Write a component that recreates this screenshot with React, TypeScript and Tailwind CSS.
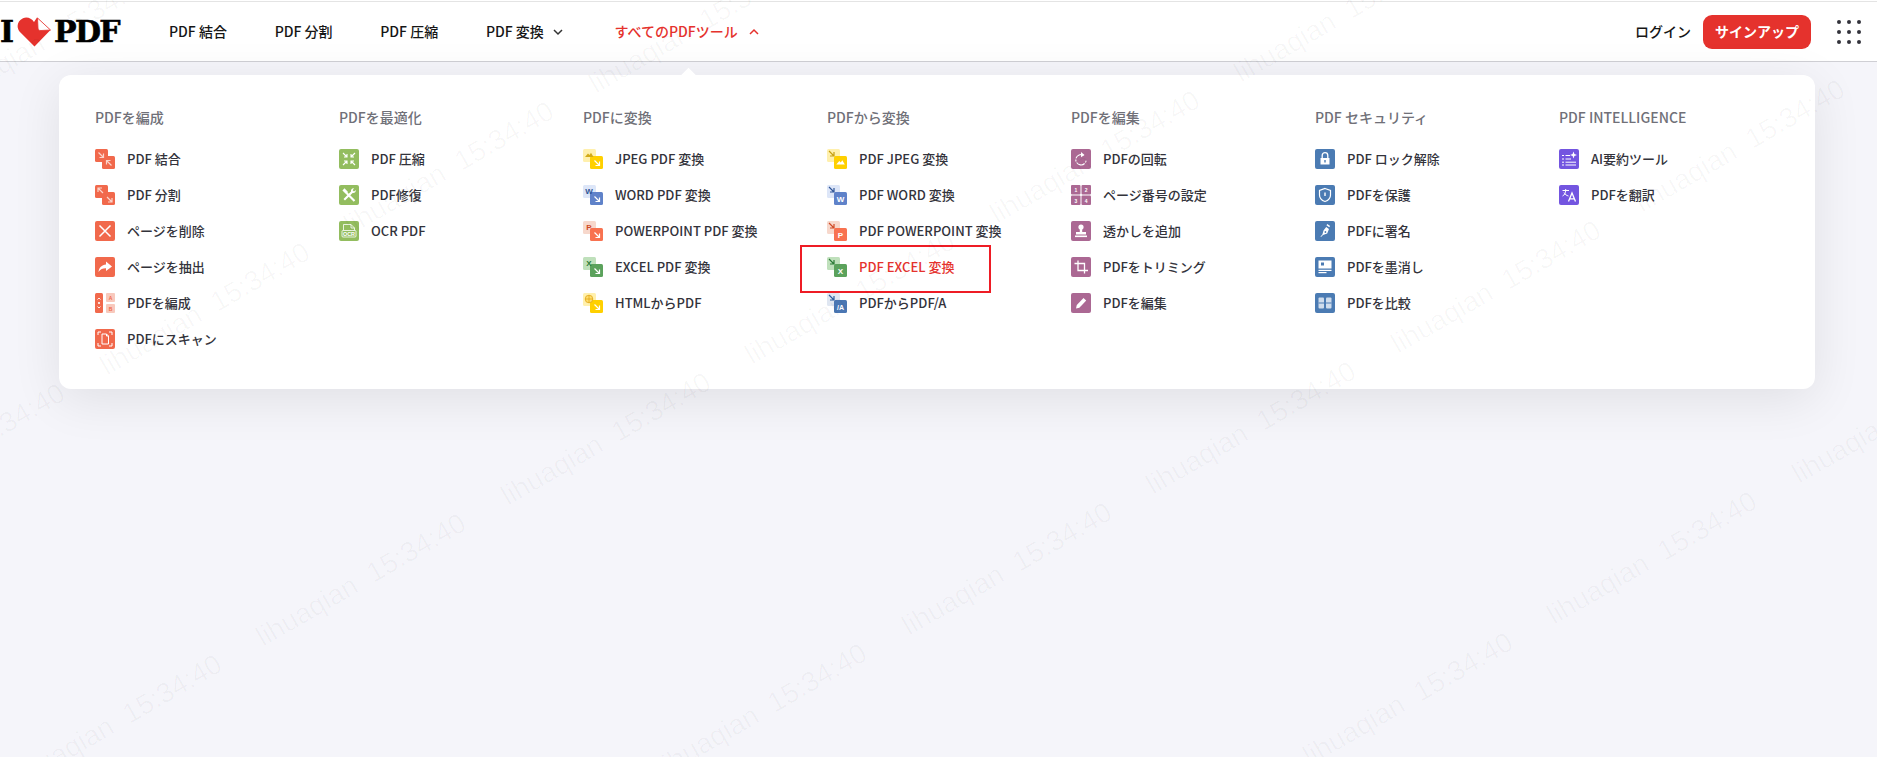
import React from "react";

const ORANGE = "#f1694c";
const GREEN = "#93bd5f";
const PURPLE = "#ab6893";
const BLUE = "#4b7bb3";
const VIOLET = "#7355e0";

function Svg({ children }: { children: React.ReactNode }) {
  return (
    <svg width="20" height="20" viewBox="0 0 20 20" className="shrink-0 block">
      {children}
    </svg>
  );
}

function Solid({ c, children }: { c: string; children: React.ReactNode }) {
  return (
    <Svg>
      <rect width="20" height="20" rx="2" fill={c} />
      {children}
    </Svg>
  );
}

function Duo({ light, dark, tl, br }: { light: string; dark: string; tl: React.ReactNode; br: React.ReactNode }) {
  return (
    <Svg>
      <rect width="13" height="13" rx="1.5" fill={light} />
      <rect x="7" y="7" width="13" height="13" rx="1.5" fill={dark} />
      {tl}
      {br}
    </Svg>
  );
}

const L = ({ x, y, c, t }: { x: number; y: number; c: string; t: string }) => (
  <text x={x} y={y} fontSize="8" fontWeight="700" fill={c} textAnchor="middle" fontFamily="'Liberation Sans', sans-serif">
    {t}
  </text>
);

const ArrowBR = ({ x, y, c, s = 5 }: { x: number; y: number; c: string; s?: number }) => (
  <path d={`M${x} ${y}L${x + s} ${y + s}M${x + s} ${y + 1}V${y + s}H${x + 1}`} stroke={c} strokeWidth="1.2" fill="none" />
);
const ArrowTL = ({ x, y, c, s = 5 }: { x: number; y: number; c: string; s?: number }) => (
  <path d={`M${x + s} ${y + s}L${x} ${y}M${x} ${y + s - 1}V${y}H${x + s - 1}`} stroke={c} strokeWidth="1.2" fill="none" />
);

const Mountain = ({ x, y, c }: { x: number; y: number; c: string }) => (
  <path d={`M${x} ${y + 5}L${x + 3} ${y + 1.5}L${x + 4.5} ${y + 3}L${x + 6} ${y + 0.8}L${x + 8.5} ${y + 5}Z`} fill={c} />
);

const W = "#fff";

const icons: Record<string, React.ReactNode> = {
  merge: (
    <Duo light={ORANGE} dark={ORANGE} tl={<ArrowBR x={3.5} y={3.5} c="#fbd5cc" />} br={<ArrowTL x={11.5} y={11.5} c="#fbd5cc" />} />
  ),
  split: (
    <Duo light={ORANGE} dark={ORANGE} tl={<ArrowTL x={3} y={3} c="#fbd5cc" />} br={<ArrowBR x={12} y={12} c="#fbd5cc" />} />
  ),
  del: (
    <Solid c={ORANGE}>
      <path d="M4.5 4.5L15.5 15.5M15.5 4.5L4.5 15.5" stroke={W} strokeWidth="1.5" />
    </Solid>
  ),
  extract: (
    <Solid c={ORANGE}>
      <path d="M11 4.5L17 9.5L11 14V11.3C8 11.2 5.5 12.2 3.5 15C4 10.8 6.7 7.8 11 7.5Z" fill={W} />
    </Solid>
  ),
  organize: (
    <Svg>
      <rect width="8" height="20" rx="1.5" fill={ORANGE} />
      <rect x="11" width="9" height="9" rx="1" fill="#f8c9bc" />
      <rect x="11" y="11" width="9" height="9" rx="1" fill="#f8c9bc" />
      <path d="M2.5 6.5L4 5L5.5 6.5M2.5 13.5L4 15L5.5 13.5" stroke={W} strokeWidth="0.9" fill="none" />
      <circle cx="4" cy="10" r="1.1" fill={W} />
      <text x="15.5" y="7" fontSize="5" fontWeight="700" fill={ORANGE} textAnchor="middle" fontFamily="'Liberation Sans', sans-serif">A</text>
      <text x="15.5" y="18" fontSize="5" fontWeight="700" fill={ORANGE} textAnchor="middle" fontFamily="'Liberation Sans', sans-serif">B</text>
    </Svg>
  ),
  scan: (
    <Solid c={ORANGE}>
      <path d="M3 6V3H6M14 3H17V6M3 14V17H6M14 17H17V14" stroke={W} strokeWidth="1" fill="none" />
      <path d="M7 5H11.5L13.5 7V15H7ZM11.5 5V7H13.5" stroke={W} strokeWidth="1" fill="none" />
    </Solid>
  ),
  compress: (
    <Solid c={GREEN}>
      <g stroke={W} strokeWidth="1.1" fill="none">
        <path d="M4 4L8 8M8 5V8H5" />
        <path d="M16 4L12 8M12 5V8H15" />
        <path d="M4 16L8 12M8 15V12H5" />
        <path d="M16 16L12 12M12 15V12H15" />
      </g>
    </Solid>
  ),
  repair: (
    <Solid c={GREEN}>
      <path d="M5.5 3.2L9 7L7 9L3.4 5.4Z" fill={W} />
      <path d="M7.5 8L15.5 16" stroke={W} strokeWidth="2.2" />
      <path d="M15 3.2C13 3 11.6 4.6 12 6.5L4.5 14L6 15.5L13.6 8C15.6 8.3 17 6.8 16.8 5L15 6.5L13.7 5.3Z" fill={W} />
    </Solid>
  ),
  ocr: (
    <Solid c={GREEN}>
      <path d="M4.5 9V3.5H12L15.5 7V9M12 3.5V7H15.5" stroke={W} strokeWidth="0.8" fill="none" />
      <rect x="3" y="9.5" width="14" height="6.5" rx="1" fill="none" stroke={W} strokeWidth="0.8" />
      <text x="10" y="15" fontSize="5.4" fontWeight="700" fill={W} textAnchor="middle" fontFamily="'Liberation Sans', sans-serif">OCR</text>
    </Solid>
  ),
  jpg2: (
    <Duo light="#fff0ad" dark="#ffd000" tl={<Mountain x={2} y={3} c="#d2aa18" />} br={<ArrowBR x={11.5} y={11.5} c={W} />} />
  ),
  word2: (
    <Duo light="#dde6f8" dark="#5f82c9" tl={<L x={6} y={9} c="#2f5597" t="W" />} br={<ArrowBR x={11.5} y={11.5} c={W} />} />
  ),
  ppt2: (
    <Duo light="#f7d8cc" dark="#f87250" tl={<L x={6} y={9} c="#cf4a26" t="P" />} br={<ArrowBR x={11.5} y={11.5} c={W} />} />
  ),
  xls2: (
    <Duo light="#bfe0bb" dark="#5ba25c" tl={<L x={6} y={9} c="#2a7a35" t="X" />} br={<ArrowBR x={11.5} y={11.5} c={W} />} />
  ),
  html2: (
    <Duo
      light="#fff0ad"
      dark="#ffd000"
      tl={
        <g stroke="#e0a415" strokeWidth="0.8" fill="#ffdf70">
          <circle cx="6" cy="6" r="3.8" />
          <path d="M2.2 6H9.8M6 2.2V9.8" />
        </g>
      }
      br={<ArrowBR x={11.5} y={11.5} c={W} />}
    />
  ),
  "2jpg": (
    <Duo light="#fff0ad" dark="#ffd000" tl={<ArrowBR x={2} y={2} c="#c79f10" />} br={<Mountain x={9.3} y={10.5} c={W} />} />
  ),
  "2word": (
    <Duo light="#dde6f8" dark="#5f82c9" tl={<ArrowBR x={2} y={2} c="#2f5597" />} br={<L x={13.5} y={17} c={W} t="W" />} />
  ),
  "2ppt": (
    <Duo light="#f7d8cc" dark="#f87250" tl={<ArrowBR x={2} y={2} c="#cf4a26" />} br={<L x={13.5} y={17} c={W} t="P" />} />
  ),
  "2xls": (
    <Duo light="#bfe0bb" dark="#5ba25c" tl={<ArrowBR x={2} y={2} c="#2a7a35" />} br={<L x={13.5} y={17} c={W} t="X" />} />
  ),
  "2pdfa": (
    <Duo
      light="#dfe6f1"
      dark="#4b77b3"
      tl={<ArrowBR x={2} y={2} c="#2d5c9c" />}
      br={
        <text x="13.5" y="16.5" fontSize="7" fontWeight="700" fill={W} textAnchor="middle" fontFamily="'Liberation Sans', sans-serif">/A</text>
      }
    />
  ),
  rotate: (
    <Solid c={PURPLE}>
      <path d="M12.5 6.2A5.2 5.2 0 1 0 15.2 10.5" stroke={W} strokeWidth="1.1" fill="none" strokeDasharray="9 1.2 2 1.2" />
      <path d="M10 3L13.5 6L10 8.2Z" fill={W} />
    </Solid>
  ),
  numbers: (
    <Svg>
      <rect width="9.5" height="9.5" rx="1" fill={PURPLE} />
      <rect x="10.5" width="9.5" height="9.5" rx="1" fill={PURPLE} />
      <rect y="10.5" width="9.5" height="9.5" rx="1" fill={PURPLE} />
      <rect x="10.5" y="10.5" width="9.5" height="9.5" rx="1" fill={PURPLE} />
      {[["1", 4.8, 7], ["2", 15.2, 7], ["3", 4.8, 17.5], ["4", 15.2, 17.5]].map(([t, x, y]) => (
        <text key={t as string} x={x as number} y={y as number} fontSize="5" fontWeight="700" fill={W} textAnchor="middle" fontFamily="'Liberation Sans', sans-serif">
          {t}
        </text>
      ))}
    </Svg>
  ),
  stamp: (
    <Solid c={PURPLE}>
      <circle cx="10" cy="6" r="2.6" fill={W} />
      <path d="M8.8 7.5H11.2V11H15V13.5H5V11H8.8Z" fill={W} />
      <rect x="4" y="14.5" width="12" height="1.6" fill={W} />
    </Solid>
  ),
  crop: (
    <Solid c={PURPLE}>
      <path d="M7 3.5V13.5H17M3.5 6.5H13.5V16.5" stroke={W} strokeWidth="1.3" fill="none" />
    </Solid>
  ),
  edit: (
    <Solid c={PURPLE}>
      <path d="M5 15.5L5.8 12L12.5 5L15.2 7.6L8.4 14.7Z" fill={W} />
    </Solid>
  ),
  unlock: (
    <Solid c={BLUE}>
      <path d="M7.2 9V6.5A2.8 2.8 0 0 1 12.8 6.5V9" stroke={W} strokeWidth="1.3" fill="none" />
      <path d="M5.5 9H14.5V15.5H5.5Z" fill={W} />
      <rect x="9.3" y="11" width="1.4" height="2.5" fill={BLUE} />
    </Solid>
  ),
  protect: (
    <Solid c={BLUE}>
      <path d="M10 3.5L15.5 5.5V10C15.5 13 13 15.5 10 16.5C7 15.5 4.5 13 4.5 10V5.5Z" stroke={W} strokeWidth="1.2" fill="none" />
      <rect x="9.3" y="7.5" width="1.4" height="3.5" fill={W} />
    </Solid>
  ),
  sign: (
    <Solid c={BLUE}>
      <path d="M11.2 6L14 8L12.2 12.5L8 14L6 16L5.5 15.5L7.4 13.5L8.5 9.4Z" fill={W} />
      <circle cx="10.4" cy="11" r="0.9" fill={BLUE} />
      <rect x="11.6" y="3.8" width="3.4" height="1.5" transform="rotate(36 13.3 4.5)" fill={W} />
    </Solid>
  ),
  redact: (
    <Solid c={BLUE}>
      <rect x="3.5" y="3.5" width="13" height="8" fill={W} />
      <rect x="6" y="5.5" width="3" height="3" fill={BLUE} />
      <rect x="3.5" y="12.8" width="13" height="1.2" fill={W} />
      <rect x="3.5" y="15" width="8" height="1.2" fill={W} />
    </Solid>
  ),
  compare: (
    <Solid c={BLUE}>
      <rect x="3.5" y="4.5" width="5.5" height="11" rx="1" fill="#cfdcec" />
      <rect x="11" y="4.5" width="5.5" height="11" rx="1" fill="#cfdcec" />
      <path d="M3.5 10H9M11 10H16.5" stroke={BLUE} strokeWidth="1" />
    </Solid>
  ),
  summary: (
    <Solid c={VIOLET}>
      <path d="M3 6.5H5M6.5 6.5H11M3 10H5M6.5 10H12M3 13.2H5M6.5 13.2H17M3 16H5M6.5 16H17" stroke={W} strokeWidth="1" />
      <path d="M14.5 2.5L15.4 5.1L18 6L15.4 6.9L14.5 9.5L13.6 6.9L11 6L13.6 5.1Z" fill={W} />
    </Solid>
  ),
  translate: (
    <Solid c={VIOLET}>
      <path d="M3.5 5.5H10M6.7 4V5.5C6.7 8 5.5 10 3.5 11M5 7.5C6 9.5 7.5 10.5 9.5 11" stroke={W} strokeWidth="1" fill="none" />
      <path d="M9.5 16.5L13 8L16.5 16.5M10.8 13.8H15.2" stroke={W} strokeWidth="1.3" fill="none" />
    </Solid>
  ),
};

const columns: { title: string; items: [string, string][] }[] = [
  {
    title: "PDFを編成",
    items: [
      ["merge", "PDF 結合"],
      ["split", "PDF 分割"],
      ["del", "ページを削除"],
      ["extract", "ページを抽出"],
      ["organize", "PDFを編成"],
      ["scan", "PDFにスキャン"],
    ],
  },
  {
    title: "PDFを最適化",
    items: [
      ["compress", "PDF 圧縮"],
      ["repair", "PDF修復"],
      ["ocr", "OCR PDF"],
    ],
  },
  {
    title: "PDFに変換",
    items: [
      ["jpg2", "JPEG PDF 変換"],
      ["word2", "WORD PDF 変換"],
      ["ppt2", "POWERPOINT PDF 変換"],
      ["xls2", "EXCEL PDF 変換"],
      ["html2", "HTMLからPDF"],
    ],
  },
  {
    title: "PDFから変換",
    items: [
      ["2jpg", "PDF JPEG 変換"],
      ["2word", "PDF WORD 変換"],
      ["2ppt", "PDF POWERPOINT 変換"],
      ["2xls", "PDF EXCEL 変換"],
      ["2pdfa", "PDFからPDF/A"],
    ],
  },
  {
    title: "PDFを編集",
    items: [
      ["rotate", "PDFの回転"],
      ["numbers", "ページ番号の設定"],
      ["stamp", "透かしを追加"],
      ["crop", "PDFをトリミング"],
      ["edit", "PDFを編集"],
    ],
  },
  {
    title: "PDF セキュリティ",
    items: [
      ["unlock", "PDF ロック解除"],
      ["protect", "PDFを保護"],
      ["sign", "PDFに署名"],
      ["redact", "PDFを墨消し"],
      ["compare", "PDFを比較"],
    ],
  },
  {
    title: "PDF INTELLIGENCE",
    items: [
      ["summary", "AI要約ツール"],
      ["translate", "PDFを翻訳"],
    ],
  },
];

function Chevron({ up, color }: { up?: boolean; color: string }) {
  return (
    <svg width="12" height="12" viewBox="0 0 12 12" className={up ? "ml-[10px]" : "ml-[8px]"}>
      <path d={up ? "M2 8L6 4L10 8" : "M2 4L6 8L10 4"} stroke={color} strokeWidth="1.5" fill="none" />
    </svg>
  );
}

function Logo() {
  return (
    <div className="flex items-center w-[120px] h-[30px] text-black font-bold text-[30px] leading-none font-['DejaVu_Serif',serif] [-webkit-text-stroke:0.6px_black]">
      <span className="w-[17px] text-[30px]">I</span>
      <svg width="35" height="30" viewBox="0 0 35 30" className="shrink-0">
        <path d="M17.5 29.5L2.5 14.5C-1 10 0.5 3.5 6 1.2C10.5-0.5 14.5 1.5 17 5L20 0.5L33.5 13Z" fill="#e5322d" />
        <path d="M20.5 1L21 11C21 13 22 13.5 24 13.5L33.5 13Z" fill="#fff" stroke="#e5322d" strokeWidth="0.8" />
      </svg>
      <span className="ml-[2px] tracking-[-1.6px]">PDF</span>
    </div>
  );
}

function Watermarks() {
  const marks: { x: number; y: number; k: string }[] = [];
  for (let j = -4; j <= 5; j++) {
    for (let i = -7; i <= 9; i++) {
      const x = 465 + i * 244.5 + j * 401 - 104;
      const y = 520 - i * 141 + j * 130 + 60;
      if (x > -180 && x < 2060 && y > -160 && y < 920) marks.push({ x, y, k: `${i}_${j}` });
    }
  }
  return (
    <div className="absolute inset-0 overflow-hidden pointer-events-none z-50">
      {marks.map((m) => (
        <span
          key={m.k}
          className="absolute -translate-x-1/2 -translate-y-1/2 -rotate-30 whitespace-pre text-[28px] leading-none text-[#00000008] font-['Liberation_Sans',sans-serif]"
          style={{ left: m.x, top: m.y }}
        >
          {"lihuaqian  15:34:40"}
        </span>
      ))}
    </div>
  );
}

export default function App() {
  return (
    <div className="relative h-[757px] w-full overflow-hidden bg-[#f5f5fa] font-['Noto_Sans_CJK_JP','Noto_Sans',sans-serif]">
      <div className="bg-white pt-px">
        <header className="flex h-[61px] items-center justify-between border-y border-t-[#e4e4e4] border-b-[#cfcfd4] bg-white pr-[16px] text-[14px] font-medium text-[#161616]">
          <div className="flex items-center">
            <Logo />
            <nav className="ml-[49px] flex items-center gap-[47.7px]">
              <span>PDF 結合</span>
              <span>PDF 分割</span>
              <span>PDF 圧縮</span>
              <span className="flex items-center">
                PDF 変換
                <Chevron color="#333" />
              </span>
              <span className="ml-[3px] flex items-center text-[#e5322d]">
                すべてのPDFツール
                <Chevron up color="#e5322d" />
              </span>
            </nav>
          </div>
          <div className="flex items-center">
            <span>ログイン</span>
            <span className="ml-[12px] flex h-[34px] w-[108px] items-center justify-center rounded-[9px] bg-[#e5322d] font-bold text-white">
              サインアップ
            </span>
            <div className="ml-[26px] grid grid-cols-3 gap-[6px]">
              {Array.from({ length: 9 }).map((_, i) => (
                <span key={i} className="size-[4px] rounded-full bg-[#33333b]" />
              ))}
            </div>
          </div>
        </header>
      </div>

      <div className="relative ml-[59px] mt-[13px] h-[314px] w-[1756px] rounded-[12px] bg-white pl-[36px] pt-[31px] shadow-[0_10px_50px_rgba(0,0,0,0.09)]">
        <span className="absolute left-[624px] top-[-5px] size-[11px] rotate-45 bg-white" />
        <div className="relative grid grid-cols-[repeat(7,244px)]">
          {columns.map((col) => (
            <div key={col.title}>
              <h3 className="h-[22px] text-[14px] font-medium leading-[22px] text-[#707078]">{col.title}</h3>
              <ul className="mt-[21px] flex flex-col gap-[16px]">
                {col.items.map(([icon, label]) => (
                  <li key={label} className="flex h-[20px] items-center gap-[12px]">
                    {icons[icon]}
                    <span
                      className={
                        label === "PDF EXCEL 変換"
                          ? "text-[13px] font-medium leading-[20px] text-[#e5322d]"
                          : "text-[13px] font-medium leading-[20px] text-[#33333b]"
                      }
                    >
                      {label}
                    </span>
                  </li>
                ))}
              </ul>
            </div>
          ))}
        </div>
        <div className="absolute left-[741px] top-[170px] h-[48px] w-[191px] border-2 border-[#ee1c25]" />
      </div>

      <Watermarks />
    </div>
  );
}
